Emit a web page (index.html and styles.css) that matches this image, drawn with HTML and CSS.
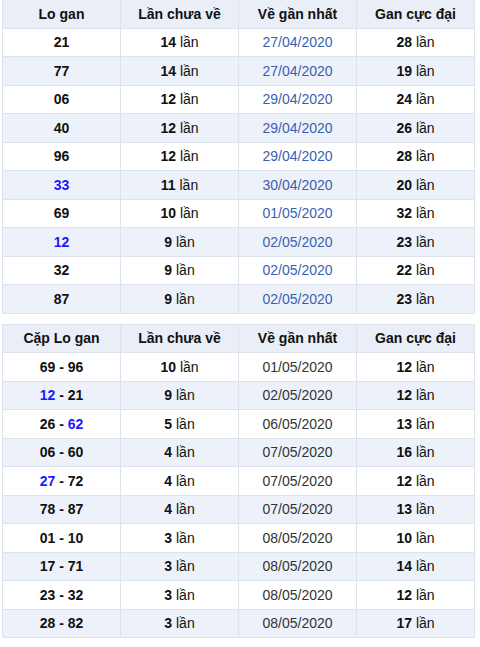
FILE: index.html
```html
<!DOCTYPE html>
<html lang="vi">
<head>
<meta charset="utf-8">
<link rel="stylesheet" href="styles.css">
</head>
<body>
<div class="wrap">
<table class="tbl">
  <thead>
    <tr><th>Lo gan</th><th>Lần chưa về</th><th>Về gần nhất</th><th>Gan cực đại</th></tr>
  </thead>
  <tbody>
    <tr><td class="num">21</td><td><b>14</b> lần</td><td class="date">27/04/2020</td><td><b>28</b> lần</td></tr>
    <tr><td class="num">77</td><td><b>14</b> lần</td><td class="date">27/04/2020</td><td><b>19</b> lần</td></tr>
    <tr><td class="num">06</td><td><b>12</b> lần</td><td class="date">29/04/2020</td><td><b>24</b> lần</td></tr>
    <tr><td class="num">40</td><td><b>12</b> lần</td><td class="date">29/04/2020</td><td><b>26</b> lần</td></tr>
    <tr><td class="num">96</td><td><b>12</b> lần</td><td class="date">29/04/2020</td><td><b>28</b> lần</td></tr>
    <tr><td class="num"><span class="hl">33</span></td><td><b>11</b> lần</td><td class="date">30/04/2020</td><td><b>20</b> lần</td></tr>
    <tr><td class="num">69</td><td><b>10</b> lần</td><td class="date">01/05/2020</td><td><b>32</b> lần</td></tr>
    <tr><td class="num"><span class="hl">12</span></td><td><b>9</b> lần</td><td class="date">02/05/2020</td><td><b>23</b> lần</td></tr>
    <tr><td class="num">32</td><td><b>9</b> lần</td><td class="date">02/05/2020</td><td><b>22</b> lần</td></tr>
    <tr><td class="num">87</td><td><b>9</b> lần</td><td class="date">02/05/2020</td><td><b>23</b> lần</td></tr>
  </tbody>
</table>
<table class="tbl second">
  <thead>
    <tr><th>Cặp Lo gan</th><th>Lần chưa về</th><th>Về gần nhất</th><th>Gan cực đại</th></tr>
  </thead>
  <tbody>
    <tr><td class="num">69 - 96</td><td><b>10</b> lần</td><td class="date2">01/05/2020</td><td><b>12</b> lần</td></tr>
    <tr><td class="num"><span class="hl">12</span> - 21</td><td><b>9</b> lần</td><td class="date2">02/05/2020</td><td><b>12</b> lần</td></tr>
    <tr><td class="num">26 - <span class="hl">62</span></td><td><b>5</b> lần</td><td class="date2">06/05/2020</td><td><b>13</b> lần</td></tr>
    <tr><td class="num">06 - 60</td><td><b>4</b> lần</td><td class="date2">07/05/2020</td><td><b>16</b> lần</td></tr>
    <tr><td class="num"><span class="hl">27</span> - 72</td><td><b>4</b> lần</td><td class="date2">07/05/2020</td><td><b>12</b> lần</td></tr>
    <tr><td class="num">78 - 87</td><td><b>4</b> lần</td><td class="date2">07/05/2020</td><td><b>13</b> lần</td></tr>
    <tr><td class="num">01 - 10</td><td><b>3</b> lần</td><td class="date2">08/05/2020</td><td><b>10</b> lần</td></tr>
    <tr><td class="num">17 - 71</td><td><b>3</b> lần</td><td class="date2">08/05/2020</td><td><b>14</b> lần</td></tr>
    <tr><td class="num">23 - 32</td><td><b>3</b> lần</td><td class="date2">08/05/2020</td><td><b>12</b> lần</td></tr>
    <tr><td class="num">28 - 82</td><td><b>3</b> lần</td><td class="date2">08/05/2020</td><td><b>17</b> lần</td></tr>
  </tbody>
</table>
</div>
</body>
</html>
```
FILE: styles.css
```css
html, body {
  margin: 0;
  padding: 0;
  background: #ffffff;
}
body {
  font-family: "Liberation Sans", Arial, sans-serif;
  font-size: 14px;
  color: #111;
}
.wrap {
  padding: 0 5px 0 2px;
  margin-top: -1px;
}
.tbl {
  width: 473px;
  border-collapse: collapse;
  table-layout: fixed;
  border: 1px solid #d9dfe8;
}
.second {
  margin-top: 10px;
}
.tbl th, .tbl td {
  border: 1px solid #dde3ec;
  text-align: center;
  height: 27.5px;
  padding: 0;
  vertical-align: middle;
}
.tbl th {
  font-weight: bold;
  background: #e9eef7;
  color: #111;
}
.tbl tbody tr:nth-child(even) td {
  background: #edf2fa;
}
.tbl tbody tr:nth-child(odd) td {
  background: #ffffff;
}
.num {
  font-weight: bold;
}
.hl {
  color: #1a1aff;
}
b {
  font-weight: bold;
}
.date {
  color: #3a5fb0;
}
.date2 {
  color: #333;
}
```
